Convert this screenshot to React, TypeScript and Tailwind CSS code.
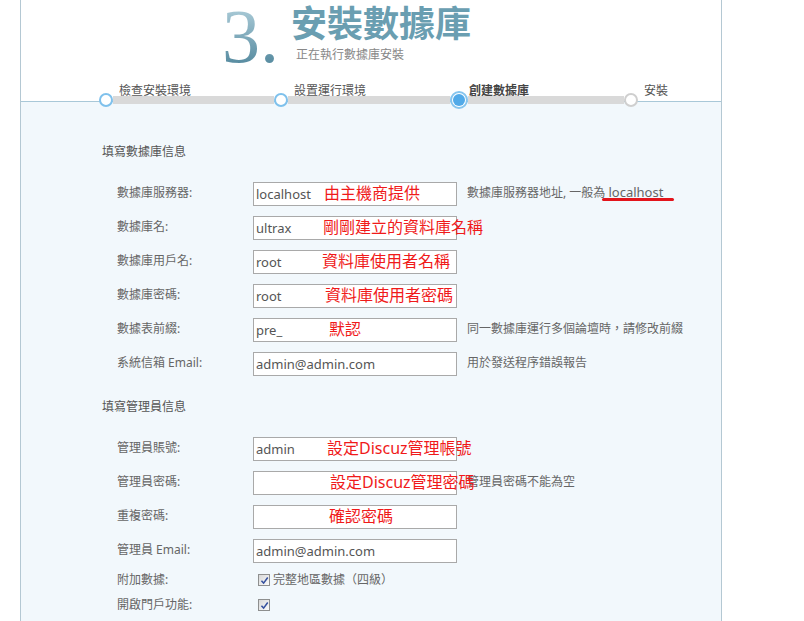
import React from 'react'

type Row = {
  label: string
  value?: string
  note?: string
  noteClass?: string
  hint?: React.ReactNode
}

const dbRows: Row[] = [
  {
    label: '數據庫服務器:',
    value: 'localhost',
    note: '由主機商提供',
    noteClass: 'left-[71px]',
    hint: (
      <>
        數據庫服務器地址, 一般為{' '}
        <span className="relative text-[13px]">
          localhost
          <span className="absolute -left-[6px] -right-[11px] top-[15px] h-[3px] rounded-full bg-[#e3141b]" />
        </span>
      </>
    ),
  },
  { label: '數據庫名:', value: 'ultrax', note: '剛剛建立的資料庫名稱', noteClass: 'left-[70px]' },
  { label: '數據庫用戶名:', value: 'root', note: '資料庫使用者名稱', noteClass: 'left-[69px]' },
  { label: '數據庫密碼:', value: 'root', note: '資料庫使用者密碼', noteClass: 'left-[72px]' },
  { label: '數據表前綴:', value: 'pre_', note: '默認', noteClass: 'left-[76px]', hint: '同一數據庫運行多個論壇時，請修改前綴' },
  { label: '系統信箱 Email:', value: 'admin@admin.com', hint: '用於發送程序錯誤報告' },
]

const adminRows: Row[] = [
  { label: '管理員賬號:', value: 'admin', note: '設定Discuz管理帳號', noteClass: 'left-[74px]' },
  { label: '管理員密碼:', value: '', note: '設定Discuz管理密碼', noteClass: 'left-[77px]', hint: '管理員密碼不能為空' },
  { label: '重複密碼:', value: '', note: '確認密碼', noteClass: 'left-[76px]' },
  { label: '管理員 Email:', value: 'admin@admin.com' },
]

function Field({ label, value, note, noteClass, hint }: Row) {
  return (
    <div className="flex h-6 items-center">
      <div className="w-[136px] text-xs text-[#666]">{label}</div>
      <div className="relative h-6 w-[204px]">
        <input
          readOnly
          defaultValue={value}
          className="h-6 w-full border border-[#a9a9a9] bg-white px-[2px] text-[13px] text-[#555] outline-none"
        />
        {note && (
          <span className={`absolute top-1/2 -translate-y-1/2 whitespace-nowrap text-base leading-none text-[#f01a1a] ${noteClass}`}>
            {note}
          </span>
        )}
      </div>
      {hint && <div className="ml-[10px] whitespace-nowrap text-xs text-[#666]">{hint}</div>}
    </div>
  )
}

function Check() {
  return (
    <span className="inline-flex h-[12px] w-[12px] items-center justify-center border border-[#8e8f8f] bg-gradient-to-br from-[#d8d8d8] to-[#fbfbfb]">
      <svg viewBox="0 0 10 10" className="h-[9px] w-[9px]">
        <path d="M1.6 5.3 L4 7.9 L8.6 1.6" fill="none" stroke="#34509e" strokeWidth="1.7" />
      </svg>
    </span>
  )
}

function Dot({ state }: { state: 'done' | 'current' | 'todo' }) {
  if (state === 'current')
    return (
      <span className="flex h-[18px] w-[18px] shrink-0 rounded-full border-2 border-[#86c5ee] bg-white p-[1px]">
        <span className="h-full w-full rounded-full bg-[#52aae8]" />
      </span>
    )
  return (
    <span
      className={`h-[14px] w-[14px] shrink-0 rounded-full border-[2.5px] bg-white ${
        state === 'done' ? 'border-[#7fc1ec]' : 'border-[#cfcfcf]'
      }`}
    />
  )
}

export default function App() {
  return (
    <div className="h-[621px] w-[804px] overflow-hidden bg-white font-['Noto_Sans','Noto_Sans_CJK_TC',sans-serif]">
      <div className="ml-[20px] flex h-full w-[702px] flex-col border-x border-[#b4c8d3]">
        {/* header */}
        <div className="flex h-[82px] pl-[201px]">
          <div className="h-[72px] bg-gradient-to-b from-[#b6d4df] to-[#4b8399] bg-clip-text font-['Liberation_Serif',serif] text-[76px] leading-[72px] text-transparent">
            3.
          </div>
          <div className="ml-[12px] mt-[4px] flex flex-col">
            <h1 className="text-[36px] font-bold leading-[40px] text-[#6a9eb1]">安裝數據庫</h1>
            <p className="mt-[3px] pl-[5px] text-xs leading-4 text-[#888]">正在執行數據庫安裝</p>
          </div>
        </div>

        {/* steps */}
        <div className="relative z-10 mt-[2px] flex h-[14px] pl-[98px] text-xs leading-[14px] text-[#555]">
          <span className="w-[175px]">檢查安裝環境</span>
          <span className="w-[175px]">設置運行環境</span>
          <span className="w-[175px] font-bold text-[#444]">創建數據庫</span>
          <span>安裝</span>
        </div>
        <div className="-mt-[7px] flex h-[18px] items-center bg-[linear-gradient(to_bottom,#fff_10px,#a9c8d8_10px,#a9c8d8_11px,#f2f8fc_11px)] pl-[78px]">
          <Dot state="done" />
          <span className="h-2 w-[161px] bg-[#d9d9d9]" />
          <Dot state="done" />
          <span className="h-2 w-[162px] bg-[#d9d9d9]" />
          <Dot state="current" />
          <span className="h-2 w-[156px] bg-[#d9d9d9]" />
          <Dot state="todo" />
        </div>

        {/* form */}
        <div className="flex-1 bg-[#f2f8fc] pt-[35px]">
          <h2 className="pl-[81px] text-xs leading-4 text-[#555]">填寫數據庫信息</h2>
          <div className="mt-[21px] flex flex-col gap-[10px] pl-[96px]">
            {dbRows.map((r) => (
              <Field key={r.label} {...r} />
            ))}
          </div>

          <h2 className="mt-[24px] pl-[81px] text-xs leading-4 text-[#555]">填寫管理員信息</h2>
          <div className="mt-[21px] flex flex-col gap-[10px] pl-[96px]">
            {adminRows.map((r) => (
              <Field key={r.label} {...r} />
            ))}
          </div>

          <div className="mt-[9px] flex flex-col gap-[7px] pl-[96px] text-xs text-[#666]">
            <div className="flex h-[18px] items-center">
              <span className="w-[141px]">附加數據:</span>
              <Check />
              <span className="ml-[3px]">完整地區數據（四級）</span>
            </div>
            <div className="flex h-[18px] items-center">
              <span className="w-[141px]">開啟門戶功能:</span>
              <Check />
            </div>
          </div>
        </div>
      </div>
    </div>
  )
}
